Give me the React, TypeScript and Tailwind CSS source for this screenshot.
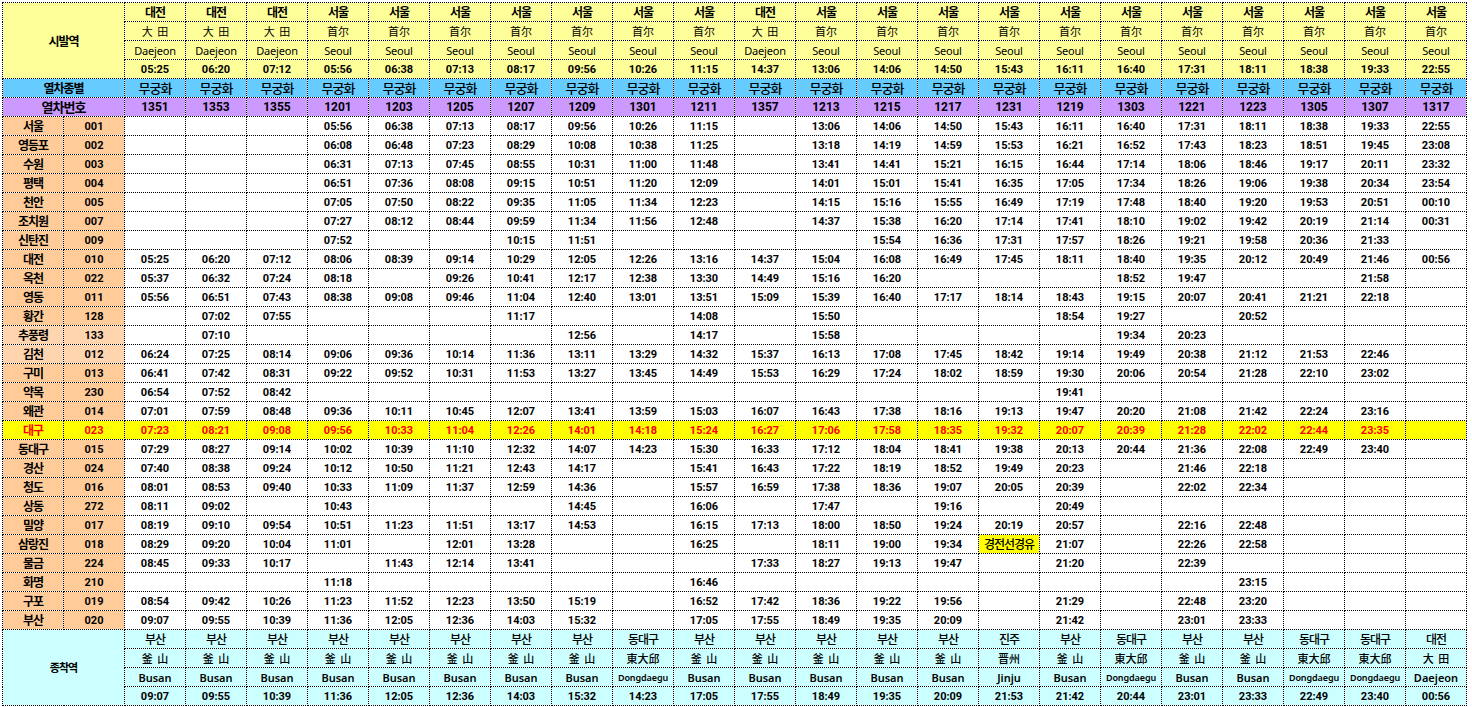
const sangHaeng = [
  ["서울", "001", ",,,05:56,06:38,07:13,08:17,09:56,10:26,11:15,,13:06,14:06,14:50,15:43,16:11,16:40,17:31,18:11,18:38,19:33,22:55"],
  ["영등포", "002", ",,,06:08,06:48,07:23,08:29,10:08,10:38,11:25,,13:18,14:19,14:59,15:53,16:21,16:52,17:43,18:23,18:51,19:45,23:08"],
  ["수원", "003", ",,,06:31,07:13,07:45,08:55,10:31,11:00,11:48,,13:41,14:41,15:21,16:15,16:44,17:14,18:06,18:46,19:17,20:11,23:32"],
  ["평택", "004", ",,,06:51,07:36,08:08,09:15,10:51,11:20,12:09,,14:01,15:01,15:41,16:35,17:05,17:34,18:26,19:06,19:38,20:34,23:54"],
  ["천안", "005", ",,,07:05,07:50,08:22,09:35,11:05,11:34,12:23,,14:15,15:16,15:55,16:49,17:19,17:48,18:40,19:20,19:53,20:51,00:10"],
  ["조치원", "007", ",,,07:27,08:12,08:44,09:59,11:34,11:56,12:48,,14:37,15:38,16:20,17:14,17:41,18:10,19:02,19:42,20:19,21:14,00:31"],
  ["신탄진", "009", ",,,07:52,,,10:15,11:51,,,,,15:54,16:36,17:31,17:57,18:26,19:21,19:58,20:36,21:33,"],
  ["대전", "010", "05:25,06:20,07:12,08:06,08:39,09:14,10:29,12:05,12:26,13:16,14:37,15:04,16:08,16:49,17:45,18:11,18:40,19:35,20:12,20:49,21:46,00:56"],
  ["옥천", "022", "05:37,06:32,07:24,08:18,,09:26,10:41,12:17,12:38,13:30,14:49,15:16,16:20,,,,18:52,19:47,,,21:58,"],
  ["영동", "011", "05:56,06:51,07:43,08:38,09:08,09:46,11:04,12:40,13:01,13:51,15:09,15:39,16:40,17:17,18:14,18:43,19:15,20:07,20:41,21:21,22:18,"],
  ["황간", "128", ",07:02,07:55,,,,11:17,,,14:08,,15:50,,,,18:54,19:27,,20:52,,,"],
  ["추풍령", "133", ",07:10,,,,,,12:56,,14:17,,15:58,,,,,19:34,20:23,,,,"],
  ["김천", "012", "06:24,07:25,08:14,09:06,09:36,10:14,11:36,13:11,13:29,14:32,15:37,16:13,17:08,17:45,18:42,19:14,19:49,20:38,21:12,21:53,22:46,"],
  ["구미", "013", "06:41,07:42,08:31,09:22,09:52,10:31,11:53,13:27,13:45,14:49,15:53,16:29,17:24,18:02,18:59,19:30,20:06,20:54,21:28,22:10,23:02,"],
  ["약목", "230", "06:54,07:52,08:42,,,,,,,,,,,,,19:41,,,,,,"],
  ["왜관", "014", "07:01,07:59,08:48,09:36,10:11,10:45,12:07,13:41,13:59,15:03,16:07,16:43,17:38,18:16,19:13,19:47,20:20,21:08,21:42,22:24,23:16,"],
  ["대구", "023", "07:23,08:21,09:08,09:56,10:33,11:04,12:26,14:01,14:18,15:24,16:27,17:06,17:58,18:35,19:32,20:07,20:39,21:28,22:02,22:44,23:35,"],
  ["동대구", "015", "07:29,08:27,09:14,10:02,10:39,11:10,12:32,14:07,14:23,15:30,16:33,17:12,18:04,18:41,19:38,20:13,20:44,21:36,22:08,22:49,23:40,"],
  ["경산", "024", "07:40,08:38,09:24,10:12,10:50,11:21,12:43,14:17,,15:41,16:43,17:22,18:19,18:52,19:49,20:23,,21:46,22:18,,,"],
  ["청도", "016", "08:01,08:53,09:40,10:33,11:09,11:37,12:59,14:36,,15:57,16:59,17:38,18:36,19:07,20:05,20:39,,22:02,22:34,,,"],
  ["상동", "272", "08:11,09:02,,10:43,,,,14:45,,16:06,,17:47,,19:16,,20:49,,,,,,"],
  ["밀양", "017", "08:19,09:10,09:54,10:51,11:23,11:51,13:17,14:53,,16:15,17:13,18:00,18:50,19:24,20:19,20:57,,22:16,22:48,,,"],
  ["삼랑진", "018", "08:29,09:20,10:04,11:01,,12:01,13:28,,,16:25,,18:11,19:00,19:34,경전선경유,21:07,,22:26,22:58,,,"],
  ["물금", "224", "08:45,09:33,10:17,,11:43,12:14,13:41,,,,17:33,18:27,19:13,19:47,,21:20,,22:39,,,,"],
  ["화명", "210", ",,,11:18,,,,,,16:46,,,,,,,,,23:15,,,"],
  ["구포", "019", "08:54,09:42,10:26,11:23,11:52,12:23,13:50,15:19,,16:52,17:42,18:36,19:22,19:56,,21:29,,22:48,23:20,,,"],
  ["부산", "020", "09:07,09:55,10:39,11:36,12:05,12:36,14:03,15:32,,17:05,17:55,18:49,19:35,20:09,,21:42,,23:01,23:33,,,"],
];

const trainNos = [1351, 1353, 1355, 1201, 1203, 1205, 1207, 1209, 1301, 1211, 1357, 1213, 1215, 1217, 1231, 1219, 1303, 1221, 1223, 1305, 1307, 1317];

const fromIdx = [0, 0, 0, 1, 1, 1, 1, 1, 1, 1, 0, 1, 1, 1, 1, 1, 1, 1, 1, 1, 1, 1];
const fromSt = [
  ["대전", "大 田", "Daejeon"],
  ["서울", "首尔", "Seoul"],
];
const fromTimes = "05:25,06:20,07:12,05:56,06:38,07:13,08:17,09:56,10:26,11:15,14:37,13:06,14:06,14:50,15:43,16:11,16:40,17:31,18:11,18:38,19:33,22:55".split(",");

const toIdx = [0, 0, 0, 0, 0, 0, 0, 0, 1, 0, 0, 0, 0, 0, 2, 0, 1, 0, 0, 1, 1, 3];
const toSt = [
  ["부산", "釜 山", "Busan"],
  ["동대구", "東大邱", "Dongdaegu"],
  ["진주", "晋州", "Jinju"],
  ["대전", "大 田", "Daejeon"],
];
const toTimes = "09:07,09:55,10:39,11:36,12:05,12:36,14:03,15:32,14:23,17:05,17:55,18:49,19:35,20:09,21:53,21:42,20:44,23:01,23:33,22:49,23:40,00:56".split(",");

const cell = "h-[19px] px-0 pb-0 border border-dotted border-black text-center align-middle overflow-hidden whitespace-nowrap";
const time = "pt-0 text-[11px] font-bold";
const korean = "pt-[2px] text-[12px] tracking-[-1px]";
const hanja = "pt-[2px] text-[11px] [word-spacing:2px]";

export default function App() {
  return (
    <div className="bg-white pl-[2px] pt-[2px] w-[1472px] h-[707px] overflow-hidden font-['Roboto','Noto_Sans_CJK_KR',sans-serif] text-black leading-none">
      <table className="table-fixed border-collapse w-[1465px]">
        <colgroup>
          <col className="w-[61px]" />
          <col className="w-[61px]" />
          {trainNos.map((n) => (
            <col key={n} className="w-[61px]" />
          ))}
        </colgroup>
        <tbody>
          <tr className="bg-[#ffff99]">
            <td colSpan={2} rowSpan={4} className={`${cell} ${korean} font-bold`}>
              시발역
            </td>
            {fromIdx.map((s, i) => (
              <td key={i} className={`${cell} ${korean} font-bold`}>
                {fromSt[s][0]}
              </td>
            ))}
          </tr>
          <tr className="bg-[#ffff99]">
            {fromIdx.map((s, i) => (
              <td key={i} className={`${cell} ${hanja}`}>
                {fromSt[s][1]}
              </td>
            ))}
          </tr>
          <tr className="bg-[#ffff99]">
            {fromIdx.map((s, i) => (
              <td key={i} className={`${cell} pt-0 text-[11px] font-['Noto_Sans'] tracking-[-0.2px]`}>
                {fromSt[s][2]}
              </td>
            ))}
          </tr>
          <tr className="bg-[#ffff99]">
            {fromTimes.map((t, i) => (
              <td key={i} className={`${cell} ${time}`}>
                {t}
              </td>
            ))}
          </tr>

          <tr className="bg-[#66ccff]">
            <td colSpan={2} className={`${cell} ${korean} font-bold`}>
              열차종별
            </td>
            {trainNos.map((n) => (
              <td key={n} className={`${cell} pt-0 text-[13px] tracking-[-1px] font-medium`}>
                무궁화
              </td>
            ))}
          </tr>
          <tr className="bg-[#cc99ff]">
            <td colSpan={2} className={`${cell} pt-0 text-[13px] tracking-[-1px] font-bold`}>
              열차번호
            </td>
            {trainNos.map((n) => (
              <td key={n} className={`${cell} pt-0 text-[12px] font-bold`}>
                {n}
              </td>
            ))}
          </tr>

          {sangHaeng.map(([name, code, times]) => {
            const daegu = name === "대구";
            const side = daegu ? "bg-[#ffff00]" : name === "추풍령" || name === "김천" ? "bg-[#ffd5b0]" : "bg-[#ffcc99]";
            return (
              <tr key={code} className={daegu ? "bg-[#ffff00] text-[#ff0000]" : "bg-white"}>
                <td className={`${cell} ${side} ${korean} font-bold`}>{name}</td>
                <td className={`${cell} ${side} ${time}`}>{code}</td>
                {times.split(",").map((t, i) =>
                  t === "경전선경유" ? (
                    <td key={i} className={`${cell} ${korean} bg-[#ffff00] font-medium`}>
                      {t}
                    </td>
                  ) : (
                    <td key={i} className={`${cell} ${time}`}>
                      {t}
                    </td>
                  ),
                )}
              </tr>
            );
          })}

          <tr className="bg-[#ccffff]">
            <td colSpan={2} rowSpan={4} className={`${cell} pt-[2px] text-[11px] tracking-[-1px] font-bold`}>
              종착역
            </td>
            {toIdx.map((s, i) => (
              <td key={i} className={`${cell} ${korean} font-medium`}>
                {toSt[s][0]}
              </td>
            ))}
          </tr>
          <tr className="bg-[#ccffff]">
            {toIdx.map((s, i) => (
              <td key={i} className={`${cell} ${hanja} font-medium`}>
                {toSt[s][1]}
              </td>
            ))}
          </tr>
          <tr className="bg-[#ccffff]">
            {toIdx.map((s, i) => (
              <td
                key={i}
                className={`${cell} pt-0 font-['Noto_Sans'] font-semibold ${s === 1 ? "text-[9px] tracking-[-0.1px]" : "text-[11px]"}`}
              >
                {toSt[s][2]}
              </td>
            ))}
          </tr>
          <tr className="bg-[#ccffff]">
            {toTimes.map((t, i) => (
              <td key={i} className={`${cell} ${time}`}>
                {t}
              </td>
            ))}
          </tr>
        </tbody>
      </table>
    </div>
  );
}
